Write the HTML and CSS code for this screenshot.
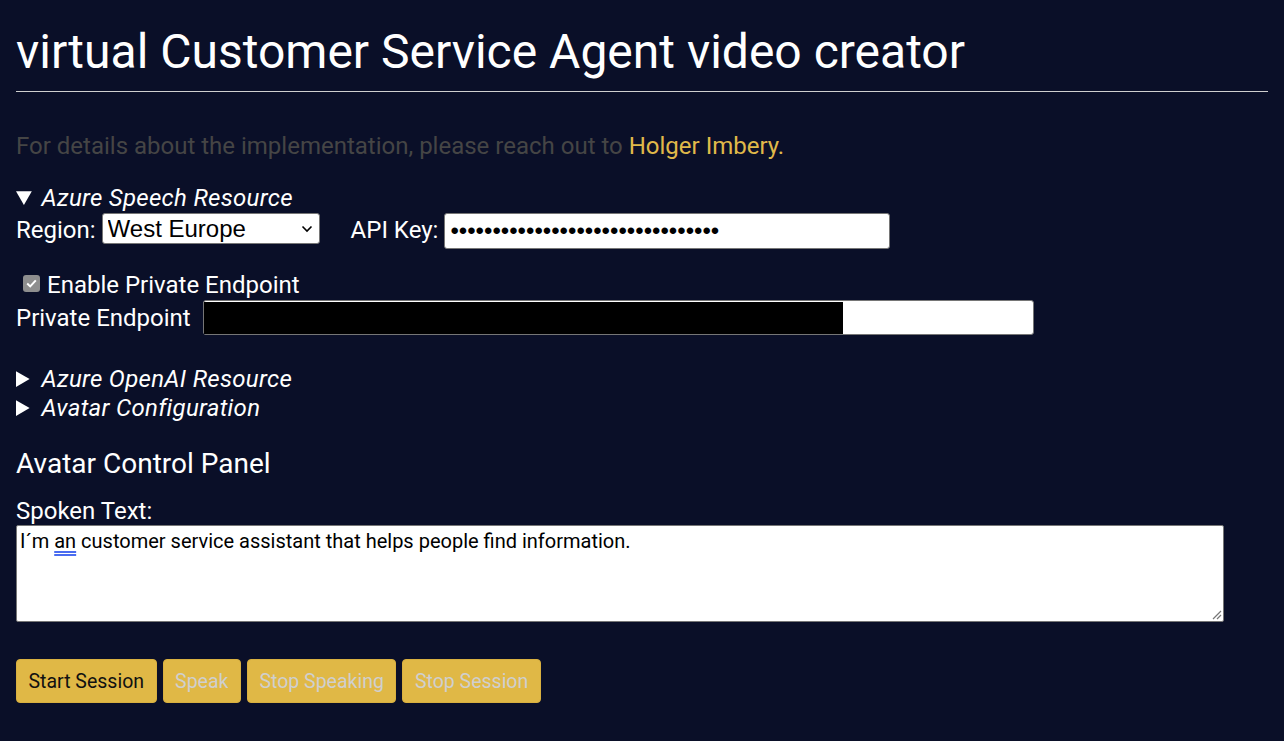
FILE: index.html
```html
<!DOCTYPE html>
<html lang="en">
<head>
<meta charset="utf-8">
<title>virtual Customer Service Agent video creator</title>
<link rel="stylesheet" href="styles.css">
</head>
<body>
<h1 class="title">virtual Customer Service Agent video creator</h1>
<hr class="rule">
<p class="intro">For details about the implementation, please reach out to <a class="contact" href="#">Holger Imbery.</a></p>

<details class="section" open>
  <summary class="section-summary">Azure Speech Resource</summary>
  <div class="config-row">
    <label class="field-label" for="region">Region:</label>
    <span class="select-wrap">
      <select id="region" class="select">
        <option>West Europe</option>
      </select>
      <svg class="chevron" width="12" height="8" viewBox="0 0 12 8"><path d="M1.5 1.5 L6 6 L10.5 1.5" fill="none" stroke="#000" stroke-width="1.6"/></svg>
    </span>
    <label class="field-label api-label" for="apikey">API Key:</label>
    <input id="apikey" class="text-input api-input" type="password" value="11111111111111111111111111111111">
  </div>
  <div class="check-row">
    <span class="checkbox"><svg width="11" height="9" viewBox="0 0 11 9"><path d="M1.2 4.6 L4.2 7.4 L9.8 1.4" fill="none" stroke="#fff" stroke-width="2"/></svg></span>
    <span class="check-label">Enable Private Endpoint</span>
  </div>
  <div class="endpoint-row">
    <span class="field-label">Private Endpoint</span>
    <span class="endpoint-input"><span class="redaction"></span></span>
  </div>
</details>

<details class="section closed-section first-closed">
  <summary class="section-summary">Azure OpenAI Resource</summary>
</details>
<details class="section closed-section">
  <summary class="section-summary">Avatar Configuration</summary>
</details>

<h2 class="panel-title">Avatar Control Panel</h2>
<div class="spoken-label">Spoken Text:</div>
<div class="spoken-box">I´m <span class="grammar">an</span> customer service assistant that helps people find information.
  <svg class="resize" width="12" height="12" viewBox="0 0 12 12"><path d="M11 3 L3 11 M11 7 L7 11" stroke="#777" stroke-width="1.2"/></svg>
</div>

<div class="button-row">
  <button class="btn">Start Session</button>
  <button class="btn" disabled>Speak</button>
  <button class="btn" disabled>Stop Speaking</button>
  <button class="btn" disabled>Stop Session</button>
</div>
</body>
</html>
```

FILE: styles.css
```css
html, body {
  margin: 0;
  background: #0a0f28;
}
body {
  padding: 0 16px;
  color: #ffffff;
  font-family: Roboto, "Liberation Sans", sans-serif;
  font-size: 24px;
  line-height: 29px;
}
.title {
  margin: 0;
  padding-top: 22px;
  font-size: 48px;
  font-weight: 400;
  line-height: 60px;
}
.rule {
  margin: 9px 0 0;
  border: 0;
  border-top: 1px solid #cfcfcf;
  height: 0;
}
.intro {
  margin: 39px 0 0;
  color: #454545;
  line-height: 30px;
}
.contact {
  color: #e0b94a;
  text-decoration: none;
}
.section {
  margin: 0;
}
.section[open] {
  margin-top: 23px;
}
.section-summary {
  font-style: italic;
  letter-spacing: 0.3px;
  line-height: 29px;
  cursor: pointer;
}
.config-row {
  display: flex;
  align-items: flex-start;
  height: 36px;
  margin-top: -1px;
}
.field-label {
  line-height: 36px;
}
.select-wrap {
  position: relative;
  margin-left: 6px;
  margin-top: 1px;
  display: inline-block;
}
.select {
  appearance: none;
  -webkit-appearance: none;
  box-sizing: border-box;
  width: 218px;
  height: 31px;
  border: 1px solid #767676;
  border-radius: 3px;
  background: #ffffff;
  font-family: "Liberation Sans", Arial, sans-serif;
  font-size: 24px;
  padding: 0 0 0 5px;
  color: #000;
  display: block;
}
.chevron {
  position: absolute;
  right: 7px;
  top: 12px;
}
.api-label {
  margin-left: 31px;
}
.text-input {
  margin-left: 6px;
  margin-top: 1px;
  box-sizing: border-box;
  width: 446px;
  height: 36px;
  border: 1px solid #767676;
  border-radius: 3px;
  background: #fff;
  padding: 0 5px;
  font-size: 24px;
  color: #000;
}
.check-row {
  display: flex;
  align-items: center;
  margin-top: 22px;
  padding-left: 7px;
  height: 30px;
}
.checkbox {
  width: 17px;
  height: 17px;
  border-radius: 3px;
  background: #8e8e8e;
  display: flex;
  align-items: center;
  justify-content: center;
  margin-right: 7px;
  margin-top: -3px;
}
.endpoint-row {
  display: flex;
  align-items: center;
  height: 35px;
}
.endpoint-input {
  margin-left: 12px;
  box-sizing: border-box;
  width: 831px;
  height: 35px;
  background: #fff;
  border: 1px solid #767676;
  border-radius: 3px;
  display: flex;
  align-items: center;
}
.redaction {
  display: block;
  width: 639px;
  height: 32px;
  background: #000;
}
.first-closed {
  margin-top: 30px;
}
.panel-title {
  margin: 25px 0 0;
  font-size: 28px;
  font-weight: 400;
  line-height: 32px;
}
.spoken-label {
  margin-top: 17px;
  line-height: 28px;
}
.spoken-box {
  position: relative;
  box-sizing: border-box;
  width: 1208px;
  height: 97px;
  margin-top: 0;
  background: #fff;
  border: 1px solid #767676;
  border-radius: 2px;
  color: #000;
  font-size: 20px;
  line-height: 26px;
  padding: 2px 3px;
}
.grammar {
  text-decoration: underline double #4a6cf0;
  text-underline-offset: 3px;
}
.resize {
  position: absolute;
  right: 1px;
  bottom: 1px;
}
.button-row {
  display: flex;
  gap: 6px;
  margin-top: 37px;
}
.btn {
  height: 44px;
  padding: 0 11.5px;
  background: #e0b846;
  border: 1px solid #d9b040;
  border-radius: 4px;
  font-family: Roboto, "Liberation Sans", sans-serif;
  font-size: 19.5px;
  color: #111;
}
.btn:disabled {
  color: #cfcfcf;
}
```
